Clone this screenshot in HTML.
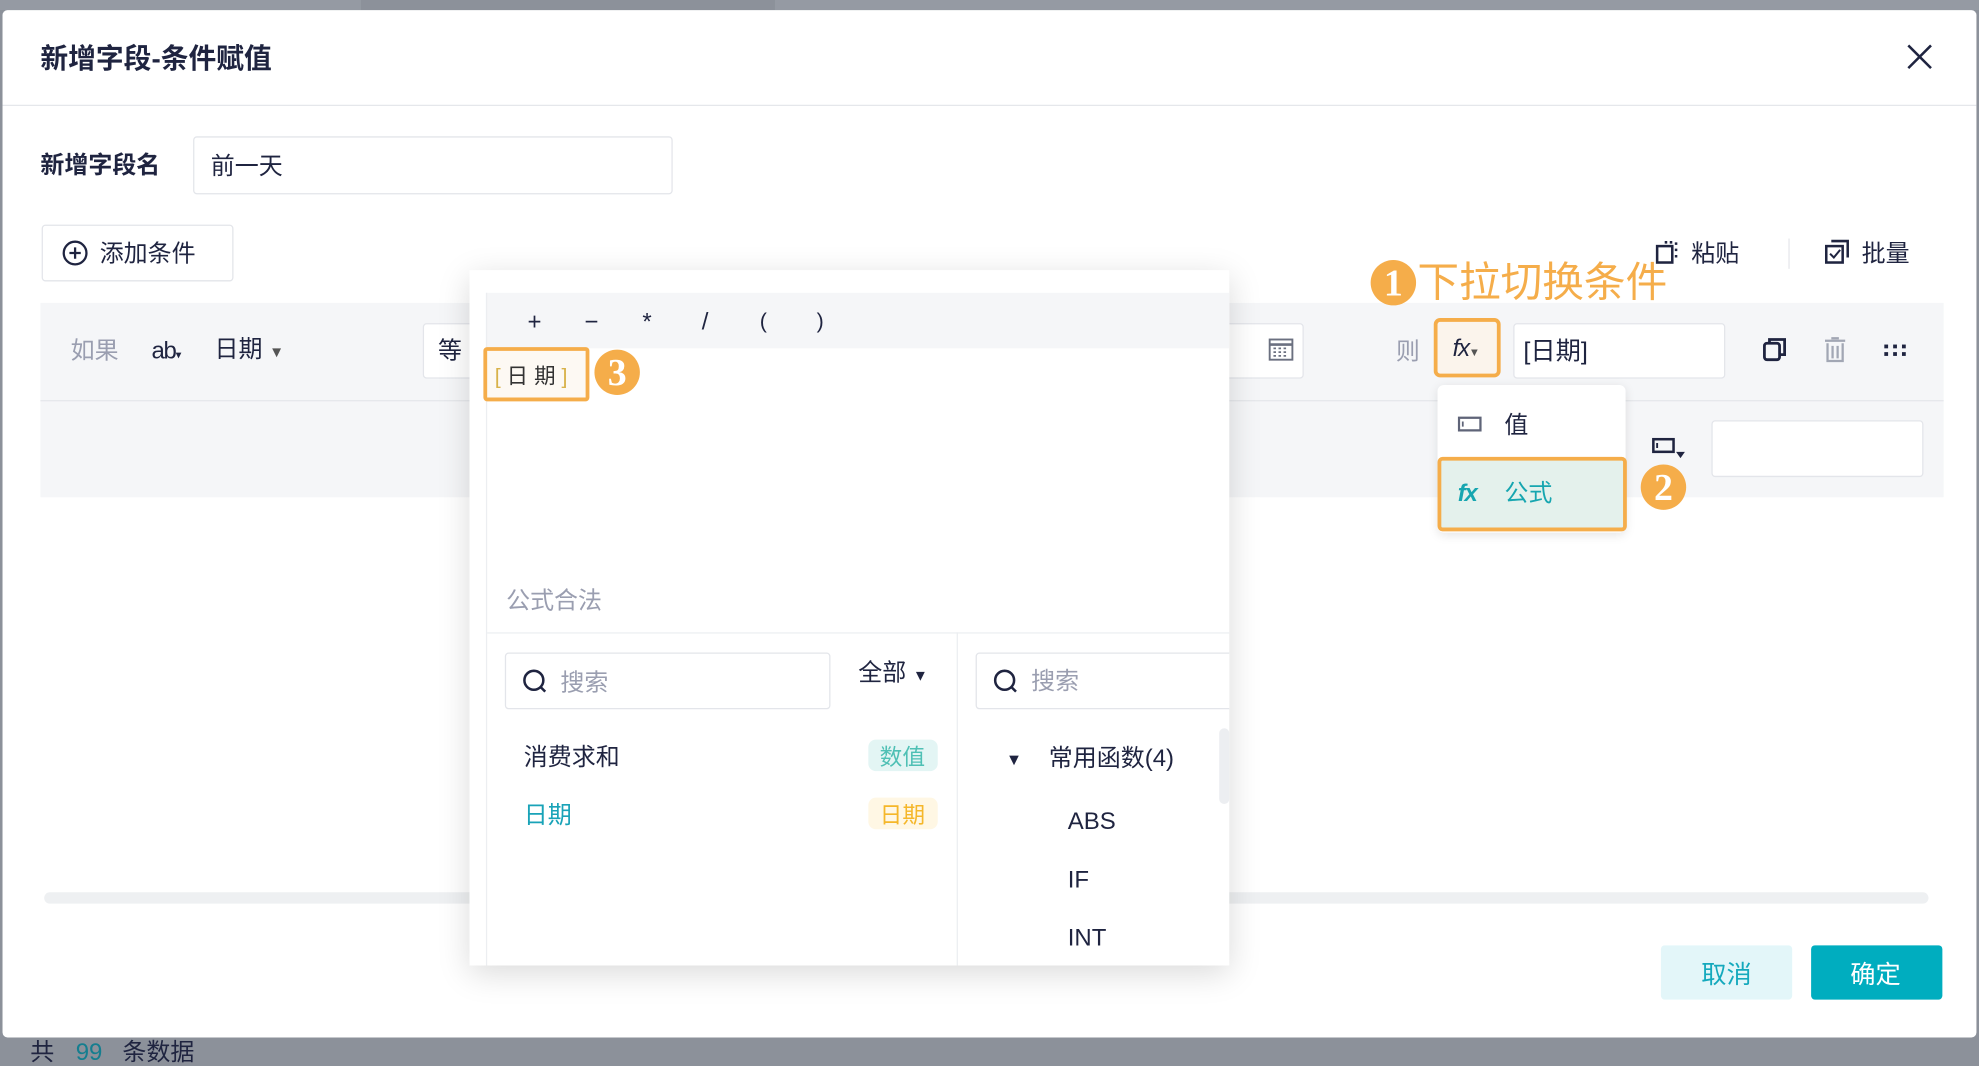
<!DOCTYPE html>
<html><head><meta charset="utf-8"><style>
*{margin:0;padding:0;box-sizing:border-box}
html,body{width:1979px;height:1065px;overflow:hidden;background:#8c919a}
body{font-family:"Liberation Sans","Noto Sans CJK SC",sans-serif;color:#1f2440}
#w{position:absolute;left:0;top:0;width:1568px;height:844px;transform:scale(1.2621);transform-origin:0 0}
.a{position:absolute}
.t{position:absolute;white-space:nowrap;line-height:1;margin-top:2px}
.box{position:absolute;background:#fff;border:1px solid #e3e5ea;border-radius:3px}
.badge{position:absolute;width:36px;height:36px;border-radius:50%;background:#f5ad4a;color:#fff;font-family:"Liberation Serif",serif;font-size:30px;font-weight:bold;text-align:center;line-height:37px}
</style></head><body><div id="w">
<div class="a" style="left:0;top:0;width:286px;height:8px;background:#959aa3"></div>
<div class="a" style="left:614px;top:0;width:954px;height:8px;background:#959aa3"></div>
<div class="a" style="left:2px;top:8px;width:1564px;height:814px;background:#fff;border-radius:4px"></div>
<div class="t" style="left:32px;top:34px;font-size:22px;font-weight:bold">新增字段-条件赋值</div>
<svg class="a" style="left:1510px;top:34px" width="22" height="22"><path d="M2 2L20 20M20 2L2 20" stroke="#1f2440" stroke-width="2"/></svg>
<div class="a" style="left:2px;top:83px;width:1564px;height:1px;background:#e5e7eb"></div>
<div class="t" style="left:32px;top:120px;font-size:19px;font-weight:bold">新增字段名</div>
<div class="box" style="left:153px;top:108px;width:380px;height:46px"></div>
<div class="t" style="left:167px;top:121px;font-size:19px">前一天</div>
<div class="box" style="left:33px;top:178px;width:152px;height:45px"></div>
<svg class="a" style="left:49px;top:190px" width="21" height="21"><circle cx="10.5" cy="10.5" r="9" fill="none" stroke="#1f2440" stroke-width="1.8"/><path d="M10.5 6v9M6 10.5h9" stroke="#1f2440" stroke-width="1.8"/></svg>
<div class="t" style="left:79px;top:190px;font-size:19px">添加条件</div>
<svg class="a" style="left:1311px;top:190px" width="22" height="20"><rect x="2" y="5" width="12" height="13" fill="none" stroke="#1f2440" stroke-width="2"/><path d="M8 2h2M12 2h2M17 2v2M17 7v2M17 12v2" stroke="#1f2440" stroke-width="2"/></svg>
<div class="t" style="left:1340px;top:190px;font-size:19px">粘贴</div>
<div class="a" style="left:1417px;top:189px;width:1px;height:24px;background:#e5e7eb"></div>
<svg class="a" style="left:1445px;top:189px" width="22" height="22"><rect x="2" y="6" width="13" height="13" fill="none" stroke="#1f2440" stroke-width="2"/><path d="M6 2h13v13" fill="none" stroke="#1f2440" stroke-width="2"/><path d="M5 12l3 3 5-6" fill="none" stroke="#1f2440" stroke-width="1.6"/></svg>
<div class="t" style="left:1475px;top:190px;font-size:19px">批量</div>

<div class="a" style="left:32px;top:240px;width:1508px;height:154px;background:#f5f6f8"></div>
<div class="a" style="left:32px;top:317px;width:1508px;height:1px;background:#e5e7eb"></div>
<div class="t" style="left:56px;top:267px;font-size:19px;color:#9a9eb0">如果</div>
<div class="t" style="left:120px;top:267px;font-size:19px;letter-spacing:-1px">ab<span style="font-size:9px">▾</span></div>
<div class="t" style="left:170px;top:266px;font-size:19px">日期 <span style="font-size:12px;color:#555">▼</span></div>
<div class="box" style="left:335px;top:256px;width:698px;height:44px"></div>
<div class="t" style="left:347px;top:267px;font-size:19px">等</div>
<svg class="a" style="left:1005px;top:267px" width="20" height="19"><rect x="1" y="2" width="18" height="16" fill="none" stroke="#6b7080" stroke-width="1.5"/><path d="M1 6h18" stroke="#6b7080" stroke-width="2"/><path d="M4 9h2M8 9h2M12 9h2M4 12h2M8 12h2M12 12h2M4 15h2M8 15h2M12 15h2" stroke="#6b7080" stroke-width="1.4"/></svg>
<div class="t" style="left:1106px;top:268px;font-size:19px;color:#9a9eb0">则</div>
<div class="a" style="left:1136px;top:252px;width:53px;height:47px;border:3px solid #f5ad4a;border-radius:5px;background:#fbf4ec"></div>
<div class="t" style="left:1151px;top:265px;font-size:19px;font-style:italic;letter-spacing:-1px">fx<span style="font-size:9px;font-style:normal;color:#555">▼</span></div>
<div class="box" style="left:1199px;top:256px;width:168px;height:44px"></div>
<div class="t" style="left:1207px;top:267px;font-size:20px">[日期]</div>
<svg class="a" style="left:1396px;top:266px" width="22" height="22"><rect x="2" y="6" width="12" height="13" rx="2" fill="none" stroke="#1f2440" stroke-width="2.2"/><path d="M6 6V3h12v12h-4" fill="none" stroke="#1f2440" stroke-width="2.2"/></svg>
<svg class="a" style="left:1444px;top:266px" width="20" height="22"><path d="M2 4h16M7 2h6M4 6v14h12V6M8 8v10M12 8v10" fill="none" stroke="#a2a7b4" stroke-width="1.8"/></svg>
<svg class="a" style="left:1492px;top:272px" width="20" height="12"><g fill="#1f2440"><rect x="1" y="1" width="3" height="3"/><rect x="8" y="1" width="3" height="3"/><rect x="15" y="1" width="3" height="3"/><rect x="1" y="7" width="3" height="3"/><rect x="8" y="7" width="3" height="3"/><rect x="15" y="7" width="3" height="3"/></g></svg>
<svg class="a" style="left:1308px;top:346px" width="28" height="20"><rect x="2" y="2" width="16" height="10" fill="none" stroke="#1f2440" stroke-width="2"/><path d="M5 5v4" stroke="#1f2440" stroke-width="1.5"/><path d="M20 12h7l-3.5 5z" fill="#1f2440"/></svg>
<div class="box" style="left:1356px;top:333px;width:168px;height:45px"></div>

<div class="a" style="left:1139px;top:305px;width:149px;height:117px;background:#fff;border-radius:5px;box-shadow:0 2px 8px rgba(0,0,0,.1)"></div>
<svg class="a" style="left:1155px;top:329px" width="20" height="14"><rect x="1" y="2" width="17" height="10" fill="none" stroke="#5f6478" stroke-width="1.8"/><path d="M4 5v4" stroke="#5f6478" stroke-width="1.4"/></svg>
<div class="t" style="left:1192px;top:326px;font-size:19px">值</div>
<div class="a" style="left:1139px;top:362px;width:150px;height:59px;background:#e4f1ec;border:3px solid #f5ad4a;border-radius:4px"></div>
<div class="t" style="left:1155px;top:380px;font-size:19px;font-style:italic;font-weight:bold;color:#17a6b0;letter-spacing:-1px">fx</div>
<div class="t" style="left:1192px;top:380px;font-size:19px;color:#17a6b0">公式</div>
<div class="badge" style="left:1300px;top:368px">2</div>
<div class="badge" style="left:1086px;top:206px">1</div>
<div class="t" style="left:1123px;top:205px;font-size:33px;color:#f5ad4a">下拉切换条件</div>

<div class="a" style="left:35px;top:707px;width:1493px;height:9px;background:#eef0f2;border-radius:5px"></div>
<div class="a" style="left:1316px;top:749px;width:104px;height:43px;background:#e3f6f9;border-radius:3px"></div>
<div class="t" style="left:1348px;top:761px;font-size:20px;color:#15a9bd">取消</div>
<div class="a" style="left:1435px;top:749px;width:104px;height:43px;background:#00adbf;border-radius:3px"></div>
<div class="t" style="left:1466px;top:761px;font-size:20px;color:#fff">确定</div>
<div class="t" style="left:24px;top:823px;font-size:19px;color:#1f2440">共</div>
<div class="t" style="left:60px;top:823px;font-size:19px;color:#157e8f">99</div>
<div class="t" style="left:97px;top:823px;font-size:19px;color:#1f2440">条数据</div>

<div class="a" style="left:372px;top:214px;width:602px;height:551px;background:#fff;box-shadow:0 6px 24px rgba(0,0,0,.15);overflow:hidden">
<div class="box" style="left:401px;top:303px;width:220px;height:45px"></div>
</div>
<div class="a" style="left:385px;top:232px;width:589px;height:44px;background:#f5f6f8"></div>
<div class="a" style="left:385px;top:232px;width:1px;height:533px;background:#eceef1"></div>
<div class="t" style="left:418px;top:244px;font-size:19px">+</div>
<div class="t" style="left:463px;top:244px;font-size:19px">−</div>
<div class="t" style="left:509px;top:244px;font-size:19px">*</div>
<div class="t" style="left:556px;top:244px;font-size:19px">/</div>
<div class="t" style="left:602px;top:244px;font-size:17px">(</div>
<div class="t" style="left:647px;top:244px;font-size:17px">)</div>
<div class="a" style="left:383px;top:275px;width:84px;height:43px;border:3px solid #f5ad4a;border-radius:3px;background:#fdf9f3"></div>
<div class="t" style="left:392px;top:288px;font-size:17px;color:#333"><span style="color:#d8b24a">[</span> 日 期 <span style="color:#d8b24a">]</span></div>
<div class="badge" style="left:471px;top:277px">3</div>
<div class="t" style="left:401px;top:465px;font-size:19px;color:#9a9eb0">公式合法</div>
<div class="a" style="left:386px;top:501px;width:588px;height:1px;background:#eceef1"></div>
<div class="a" style="left:758px;top:501px;width:1px;height:264px;background:#eceef1"></div>
<div class="box" style="left:400px;top:517px;width:258px;height:45px"></div>
<svg class="a" style="left:413px;top:529px" width="22" height="22"><circle cx="10" cy="10" r="7.5" fill="none" stroke="#1f2440" stroke-width="2"/><path d="M15 15l4 4" stroke="#1f2440" stroke-width="2"/></svg>
<div class="t" style="left:444px;top:530px;font-size:19px;color:#9a9eb0">搜索</div>
<div class="t" style="left:680px;top:522px;font-size:19px">全部 <span style="font-size:12px">▼</span></div>
<svg class="a" style="left:786px;top:529px" width="22" height="22"><circle cx="10" cy="10" r="7.5" fill="none" stroke="#1f2440" stroke-width="2"/><path d="M15 15l4 4" stroke="#1f2440" stroke-width="2"/></svg>
<div class="t" style="left:817px;top:529px;font-size:19px;color:#9a9eb0">搜索</div>
<div class="t" style="left:415px;top:589px;font-size:19px">消费求和</div>
<div class="a" style="left:688px;top:586px;width:55px;height:25px;background:#e3f5f4;border-radius:6px"></div>
<div class="t" style="left:697px;top:589px;font-size:18px;color:#4fc0b5">数值</div>
<div class="t" style="left:415px;top:635px;font-size:19px;color:#19a3b8">日期</div>
<div class="a" style="left:688px;top:632px;width:55px;height:25px;background:#fff7e4;border-radius:6px"></div>
<div class="t" style="left:697px;top:635px;font-size:18px;color:#f5b72a">日期</div>
<div class="t" style="left:797px;top:593px;font-size:13px">▼</div>
<div class="t" style="left:831px;top:590px;font-size:19px">常用函数(4)</div>
<div class="t" style="left:846px;top:640px;font-size:19px">ABS</div>
<div class="t" style="left:846px;top:686px;font-size:19px">IF</div>
<div class="t" style="left:846px;top:732px;font-size:19px">INT</div>
<div class="a" style="left:966px;top:577px;width:8px;height:60px;background:#eceef1;border-radius:4px"></div>
</div></body></html>
